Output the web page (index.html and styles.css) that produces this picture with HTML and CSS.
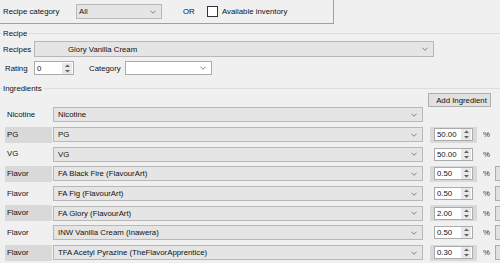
FILE: index.html
```html
<!DOCTYPE html>
<html lang="en">
<head>
  <meta charset="UTF-8">
  <title>Recipe</title>
  <link rel="stylesheet" href="styles.css">
</head>
<body>
  <div class="filter">
    <span class="filter-label">Recipe category</span>
    <div class="combo filter-combo"><span class="combo-text">All</span><svg class="chev" viewBox="0 0 7 4"><polyline points="0.5,0.5 3.5,3.5 6.5,0.5"/></svg></div>
    <span class="or">OR</span>
    <span class="check"></span>
    <span>Available inventory</span>
  </div>

  <div class="group-title"><span class="line-stub"></span><span>Recipe</span><span class="line"></span></div>
  <div class="recipes-row">
    <span class="recipes-label">Recipes</span>
    <div class="combo recipes-combo"><span class="combo-text">Glory Vanilla Cream</span><svg class="chev" viewBox="0 0 7 4"><polyline points="0.5,0.5 3.5,3.5 6.5,0.5"/></svg></div>
  </div>
  <div class="rating-row">
    <span class="rating-label">Rating</span>
    <div class="spin rating-spin"><span class="spin-text">0</span><span class="spin-btns"><svg viewBox="0 0 5 9"><polygon points="2.5,0.5 5,3 0,3"/><polygon points="0,6 5,6 2.5,8.5"/></svg></span></div>
    <span class="cat-label">Category</span>
    <div class="combo cat-combo"><span class="combo-text"></span><svg class="chev" viewBox="0 0 7 4"><polyline points="0.5,0.5 3.5,3.5 6.5,0.5"/></svg></div>
  </div>

  <div class="group-title ingredients-title"><span class="line-stub"></span><span>Ingredients</span><span class="line"></span></div>
  <div class="add-row"><button class="add-btn">Add Ingredient</button></div>

  <div class="ingredients" id="ingredients"></div>

  <script>
    const items = [
      { type: 'Nicotine', name: 'Nicotine' },
      { type: 'PG', name: 'PG', value: '50.00' },
      { type: 'VG', name: 'VG', value: '50.00' },
      { type: 'Flavor', name: 'FA Black Fire (FlavourArt)', value: '0.50', del: true },
      { type: 'Flavor', name: 'FA Fig (FlavourArt)', value: '0.50', del: true },
      { type: 'Flavor', name: 'FA Glory (FlavourArt)', value: '2.00', del: true },
      { type: 'Flavor', name: 'INW Vanilla Cream (Inawera)', value: '0.50', del: true },
      { type: 'Flavor', name: 'TFA Acetyl Pyrazine (TheFlavorApprentice)', value: '0.30', del: true },
    ];
    const chev = '<svg class="chev" viewBox="0 0 7 4"><polyline points="0.5,0.5 3.5,3.5 6.5,0.5"/></svg>';
    const spinBtns = '<span class="spin-btns"><svg viewBox="0 0 5 9"><polygon points="2.5,0.5 5,3 0,3"/><polygon points="0,6 5,6 2.5,8.5"/></svg></span>';
    document.getElementById('ingredients').innerHTML = items.map((it, i) => `
      <div class="ing-row${i % 2 ? ' alt' : ''}">
        <span class="ing-label">${it.type}</span>
        <div class="combo ing-combo"><span class="combo-text">${it.name}</span>${chev}</div>
        ${it.value ? `<div class="val"><div class="spin"><span class="spin-text">${it.value}</span>${spinBtns}</div></div><span class="pct">%</span>` : ''}
        ${it.del ? '<span class="del"></span>' : ''}
      </div>`).join('');
  </script>
</body>
</html>
```

FILE: styles.css
```css
html, body {
  margin: 0;
  padding: 0;
  overflow: hidden;
  background-color: #f0f0f0;
}
body {
  font-family: "Liberation Sans", Arial, sans-serif;
  font-size: 7.8px;
  color: #111;
  width: 500px;
  height: 263px;
}
.filter {
  box-sizing: border-box;
  width: 334px;
  height: 24px;
  border-right: 1px solid #a0a0a0;
  border-bottom: 1px solid #a0a0a0;
  display: flex;
  align-items: center;
  padding-left: 3px;
  white-space: nowrap;
}
.filter-label {
  width: 73px;
}
.combo {
  box-sizing: border-box;
  display: flex;
  align-items: center;
  flex-shrink: 0;
  background: #e5e5e5;
  border: 1px solid #b8b8b8;
  overflow: hidden;
  white-space: nowrap;
}
.combo-text {
  flex: 1;
  overflow: hidden;
}
.chev {
  width: 6px;
  height: 4px;
  margin-right: 5px;
  fill: none;
  stroke: #707070;
  stroke-width: 1;
}
.filter-combo {
  width: 86px;
  height: 15px;
  padding-left: 2px;
}
.or {
  margin-left: 21px;
  width: 24px;
}
.check {
  box-sizing: border-box;
  width: 11px;
  height: 11px;
  background: #fff;
  border: 1px solid #333;
  margin-right: 4px;
}
.group-title {
  display: flex;
  align-items: center;
  height: 10px;
  margin-top: 4px;
}
.group-title .line-stub {
  width: 2px;
  border-top: 1px solid #dcdcdc;
  margin-right: 1px;
}
.group-title .line {
  flex: 1;
  border-top: 1px solid #dcdcdc;
  margin-left: 2px;
}
.recipes-row {
  display: flex;
  align-items: center;
  margin-top: 3px;
  padding-left: 3px;
}
.recipes-label {
  width: 31px;
  overflow: hidden;
  white-space: nowrap;
}
.recipes-combo {
  width: 400px;
  height: 16px;
  padding-left: 33px;
}
.rating-row {
  display: flex;
  align-items: center;
  margin-top: 4px;
  padding-left: 5px;
  height: 14px;
}
.rating-label {
  width: 29px;
}
.spin {
  box-sizing: border-box;
  display: flex;
  align-items: center;
  flex-shrink: 0;
  background: #fff;
  border: 1px solid #ababab;
  height: 13px;
}
.spin-text {
  flex: 1;
  padding-left: 2px;
}
.spin-btns {
  display: flex;
  align-items: center;
  justify-content: center;
  width: 10px;
  height: 11px;
  background: #e8e8e8;
  margin-right: 1px;
}
.spin-btns svg {
  width: 5px;
  height: 9px;
  fill: #606060;
}
.rating-spin {
  width: 40px;
  height: 14px;
}
.cat-label {
  margin-left: 15px;
  width: 36px;
}
.cat-combo {
  width: 87px;
  height: 14px;
  background: #fff;
  border-color: #ababab;
}
.ingredients-title {
  margin-top: 8px;
}
.add-row {
  display: flex;
  justify-content: flex-end;
  align-items: flex-start;
  height: 12px;
  padding-right: 9px;
}
.add-btn {
  box-sizing: border-box;
  width: 63px;
  height: 14px;
  padding: 0 0 0 4px;
  background: #e1e1e1;
  border: 1px solid #adadad;
  font: inherit;
  color: #111;
  text-align: center;
}
.ingredients {
  width: 500px;
  overflow: hidden;
}
.ing-row {
  display: flex;
  align-items: center;
  height: 19.7px;
  white-space: nowrap;
}
.ing-row > * {
  flex-shrink: 0;
}
.ing-label {
  box-sizing: border-box;
  margin-left: 5px;
  width: 47px;
  height: 16px;
  line-height: 16px;
  padding-left: 2px;
}
.ing-combo {
  margin-left: 1px;
  width: 370px;
  height: 15px;
  padding-left: 4px;
}
.val {
  box-sizing: border-box;
  margin-left: 7px;
  width: 47px;
  height: 16px;
  display: flex;
  align-items: center;
  padding-left: 4px;
}
.val .spin {
  width: 39px;
}
.pct {
  margin-left: 6px;
  width: 12px;
  color: #333;
}
.del {
  box-sizing: border-box;
  width: 20px;
  height: 15px;
  background: #e1e1e1;
  border: 1px solid #adadad;
}
.alt .ing-label,
.alt .val {
  background: #d9d9d9;
}
```
